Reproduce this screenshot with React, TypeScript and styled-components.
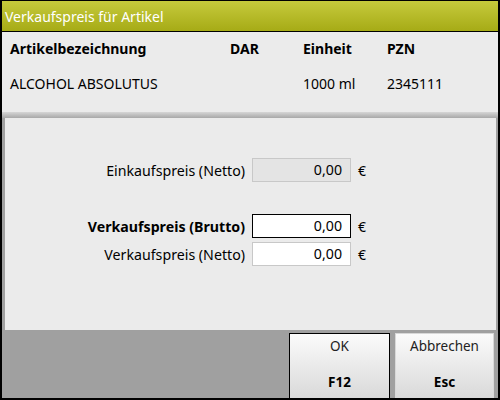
import styled, { createGlobalStyle } from "styled-components";

const GlobalStyle = createGlobalStyle`
  html, body {
    margin: 0;
    padding: 0;
    background: #ffffff;
  }
  body {
    font-family: "Noto Sans", "Open Sans", "DejaVu Sans", sans-serif;
    font-size: 13px;
    color: #000;
  }
  *, *::before, *::after {
    box-sizing: border-box;
  }
`;

const Window = styled.div`
  width: 500px;
  height: 400px;
  border: 2px solid #000;
  border-top-width: 1px;
  background: #a0a0a0;
  display: flex;
  flex-direction: column;
`;

const TitleBar = styled.div`
  flex-shrink: 0;
  height: 31px;
  border-bottom: 1px solid #000;
  background: linear-gradient(#c6ca3c, #a6ab16);
  color: #fff;
  font-size: 14px;
  display: flex;
  align-items: center;
  padding-left: 3px;
`;

const ArticleInfo = styled.div`
  flex-shrink: 0;
  height: 80px;
  background: #ebebeb;
  display: grid;
  grid-template-columns: 220px 73px 84px 1fr;
  grid-template-rows: 32px 38px;
  padding-left: 8px;
  align-items: center;
`;

const Cell = styled.div<{ $head?: boolean }>`
  font-weight: ${(p) => (p.$head ? 700 : 400)};
  font-size: 14px;
  white-space: nowrap;
`;

const Divider = styled.div`
  flex-shrink: 0;
  height: 6px;
  background: linear-gradient(#d6d6d6, #a8a8a8);
`;

const Panel = styled.div`
  flex-shrink: 0;
  height: 212px;
  margin: 0 2px 0 3px;
  background: #ebebeb;
  display: grid;
  grid-template-columns: 240px 99px auto;
  column-gap: 7px;
  row-gap: 4px;
  align-content: start;
  align-items: center;
  padding-top: 40px;
`;

const Label = styled.div<{ $bold?: boolean }>`
  text-align: right;
  font-size: 14.2px;
  font-weight: ${(p) => (p.$bold ? 700 : 400)};
  white-space: nowrap;
`;

const Field = styled.div<{ $readOnly?: boolean; $focused?: boolean }>`
  height: 24px;
  border: 1px solid ${(p) => (p.$focused ? "#000" : "#c8c8c8")};
  background: ${(p) => (p.$readOnly ? "#e4e4e4" : "#fff")};
  text-align: right;
  padding-right: 8px;
  line-height: 22px;
  font-size: 14.2px;
`;

const Currency = styled.div`
  font-size: 14px;
`;

const Spacer = styled.div`
  grid-column: 1 / 4;
  height: 24px;
`;

const Footer = styled.div`
  flex: 1;
  display: flex;
  justify-content: flex-end;
  gap: 5px;
  padding: 3px 4px 0 0;
`;

const Button = styled.div<{ $active?: boolean }>`
  width: ${(p) => (p.$active ? 101 : 99)}px;
  border: 1px solid ${(p) => (p.$active ? "#000" : "#d8d8d8")};
  border-bottom: none;
  background: linear-gradient(#fbfbfb, #d9d9d9);
  display: flex;
  flex-direction: column;
  align-items: center;
  justify-content: space-between;
  padding: 3px 0 7px;
  font-size: 13.5px;
  color: #222;
`;

const Key = styled.span`
  font-weight: 700;
  color: #000;
`;

function App() {
  return (
    <>
      <GlobalStyle />
      <Window>
        <TitleBar>Verkaufspreis für Artikel</TitleBar>
        <ArticleInfo>
          <Cell $head>Artikelbezeichnung</Cell>
          <Cell $head>DAR</Cell>
          <Cell $head>Einheit</Cell>
          <Cell $head>PZN</Cell>
          <Cell>ALCOHOL ABSOLUTUS</Cell>
          <Cell></Cell>
          <Cell>1000 ml</Cell>
          <Cell>2345111</Cell>
        </ArticleInfo>
        <Divider />
        <Panel>
          <Label>Einkaufspreis (Netto)</Label>
          <Field $readOnly>0,00</Field>
          <Currency>€</Currency>
          <Spacer />
          <Label $bold>Verkaufspreis (Brutto)</Label>
          <Field $focused>0,00</Field>
          <Currency>€</Currency>
          <Label>Verkaufspreis (Netto)</Label>
          <Field>0,00</Field>
          <Currency>€</Currency>
        </Panel>
        <Footer>
          <Button $active>
            <span>OK</span>
            <Key>F12</Key>
          </Button>
          <Button>
            <span>Abbrechen</span>
            <Key>Esc</Key>
          </Button>
        </Footer>
      </Window>
    </>
  );
}

export default App;
